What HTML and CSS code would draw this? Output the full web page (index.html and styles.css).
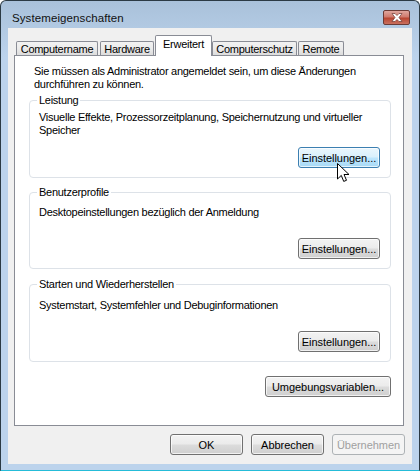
FILE: index.html
```html
<!DOCTYPE html>
<html lang="de">
<head>
    <meta charset="UTF-8">
    <meta name="viewport" content="width=device-width, initial-scale=1.0">
    <title>Systemeigenschaften</title>
    <link rel="stylesheet" href="styles.css">
</head>
<body>

    <div class="window">
        <div class="titlebar">
            <span class="title">Systemeigenschaften</span>
            <button class="close" aria-label="Schließen">
                <svg viewBox="0 0 14 9" width="14" height="9">
                    <path d="M2 .5h3l2 2 2-2h3L9 4.500l3 4H9L7 6.500 5 8.500H2l3-4z" fill="#fff" stroke="#6d3a34" stroke-width=".7"/>
                </svg>
            </button>
        </div>

        <div class="client">
            <div class="tabs">
                <div class="tab tab-name">Computername</div>
                <div class="tab tab-hardware">Hardware</div>
                <div class="tab active">Erweitert</div>
                <div class="tab tab-protect">Computerschutz</div>
                <div class="tab tab-remote">Remote</div>
            </div>

            <div class="panel">
                <p class="notice">Sie müssen als Administrator angemeldet sein, um diese Änderungen durchführen zu können.</p>

                <fieldset class="group">
                    <legend>Leistung</legend>
                    <p>Visuelle Effekte, Prozessorzeitplanung, Speichernutzung und virtueller Speicher</p>
                    <button class="btn hover">Einstellungen...</button>
                    <svg class="cursor" viewBox="0 0 13 20" width="13" height="20">
                        <path d="M.5.500v15.500l3.800-3.600 2.400 6 2.800-1.100-2.500-5.800h5z" fill="#fff" stroke="#000"/>
                    </svg>
                </fieldset>

                <fieldset class="group group-profiles">
                    <legend>Benutzerprofile</legend>
                    <p>Desktopeinstellungen bezüglich der Anmeldung</p>
                    <button class="btn">Einstellungen...</button>
                </fieldset>

                <fieldset class="group group-start">
                    <legend>Starten und Wiederherstellen</legend>
                    <p>Systemstart, Systemfehler und Debuginformationen</p>
                    <button class="btn">Einstellungen...</button>
                </fieldset>

                <div class="panel-actions">
                    <button class="btn wide">Umgebungsvariablen...</button>
                </div>
            </div>

            <div class="footer">
                <button class="btn dialog">OK</button>
                <button class="btn dialog">Abbrechen</button>
                <button class="btn dialog" disabled>Übernehmen</button>
            </div>
        </div>
    </div>

</body>
</html>
```

FILE: styles.css
```css
* {
    box-sizing: border-box;
}
html, body {
    margin: 0;
    padding: 0;
}
body {
    width: 420px;
    height: 472px;
    overflow: hidden;
    background-color: #fff;
    font-family: "Liberation Sans", Arial, sans-serif;
    font-size: 11px;
    letter-spacing: -0.27px;
    color: #000;
}
.window {
    width: 420px;
    height: 471px;
    padding: 0 7px 6px;
    background: linear-gradient(180deg, #a9c1da 0%, #bcd3ec 12%, #bcd3ec 100%);
    border: 1px solid #2b3a44;
    border-bottom-color: #25bcd8;
    border-radius: 6px 6px 0 0;
    display: flex;
    flex-direction: column;
}
.titlebar {
    height: 27px;
    flex: none;
    display: flex;
    align-items: center;
    justify-content: space-between;
    padding-top: 6px;
}
.title {
    margin-left: 4px;
    font-size: 11.5px;
    letter-spacing: 0.1px;
    color: #111;
}
.close {
    width: 27px;
    height: 15px;
    margin-right: 2px;
    padding: 0;
    display: flex;
    align-items: center;
    justify-content: center;
    border: 1px solid #6b3b36;
    border-radius: 2px;
    background: linear-gradient(180deg, #dfa79e 0%, #cf7b6e 45%, #b84632 55%, #c9705f 100%);
}
.client {
    flex: 1;
    background-color: #f0f0f0;
    padding: 7px 8px 9px 6px;
    display: flex;
    flex-direction: column;
}
.tabs {
    display: flex;
    height: 20px;
    padding-left: 2px;
    align-items: flex-end;
    position: relative;
    z-index: 1;
}
.tab {
    height: 14px;
    line-height: 14px;
    text-align: center;
    white-space: nowrap;
    background: linear-gradient(180deg, #f2f2f2 0%, #ebebeb 50%, #dcdcdc 100%);
    border: 1px solid #898c95;
    border-bottom: 0;
    border-radius: 2px 2px 0 0;
}
.tab-name {
    width: 82px;
    margin-right: 2px;
}
.tab-hardware {
    width: 54px;
    margin-right: 1px;
}
.tab-protect {
    width: 85px;
    margin-right: 1px;
}
.tab-remote {
    width: 46px;
}
.tab.active {
    width: 57px;
    height: 21px;
    margin-bottom: -1px;
    padding: 1px 0 5px;
    background: #fff;
}
.panel {
    flex: 1;
    background-color: #fff;
    border: 1px solid #898c95;
    padding: 9px 12px 0 14px;
}
.notice {
    margin: 0 0 2px 5px;
    line-height: 13px;
}
.group {
    margin: 0;
    padding: 0 10px 9px 9px;
    height: 85px;
    border: 1px solid #dde2e8;
    border-radius: 4px;
    position: relative;
    min-width: 0;
    display: flex;
    flex-direction: column;
}
.group + .group {
    margin-top: 7px;
}
.group legend {
    padding: 0 2px;
    margin-left: -2px;
    line-height: 14px;
}
.group p {
    margin: 4px 0 0;
    line-height: 13px;
}
.group-profiles {
    height: 84px;
    margin-bottom: 8px;
}
.group-profiles p {
    margin-top: 7px;
}
.group-start p {
    margin-top: 8px;
}
.group .btn {
    margin-top: auto;
    align-self: flex-end;
}
.panel-actions {
    display: flex;
    justify-content: flex-end;
    margin-top: 14px;
}
.btn {
    height: 21px;
    width: 82px;
    padding: 0;
    font-family: inherit;
    font-size: inherit;
    letter-spacing: -0.05px;
    color: #000;
    border: 1px solid #707070;
    border-radius: 3px;
    background: linear-gradient(180deg, #f3f3f3 0%, #ebebeb 48%, #dcdcdc 52%, #cfcfcf 100%);
    box-shadow: inset 0 0 0 1px rgba(255,255,255,0.7);
}
.btn.hover {
    border-color: #3c7fb1;
    background: linear-gradient(180deg, #eaf6fd 0%, #d9f0fc 48%, #bee6fd 52%, #a7d9f5 100%);
}
.btn.wide {
    width: 126px;
}
.btn.dialog {
    width: 73px;
}
.btn:disabled {
    color: #a0a0a0;
    border-color: #adb2b5;
    background: #f4f4f4;
    box-shadow: none;
}
.cursor {
    position: absolute;
    left: 307px;
    top: 56px;
}
.footer {
    display: flex;
    justify-content: flex-end;
    gap: 8px;
    padding-top: 8px;
    margin-right: -1px;
}
```
